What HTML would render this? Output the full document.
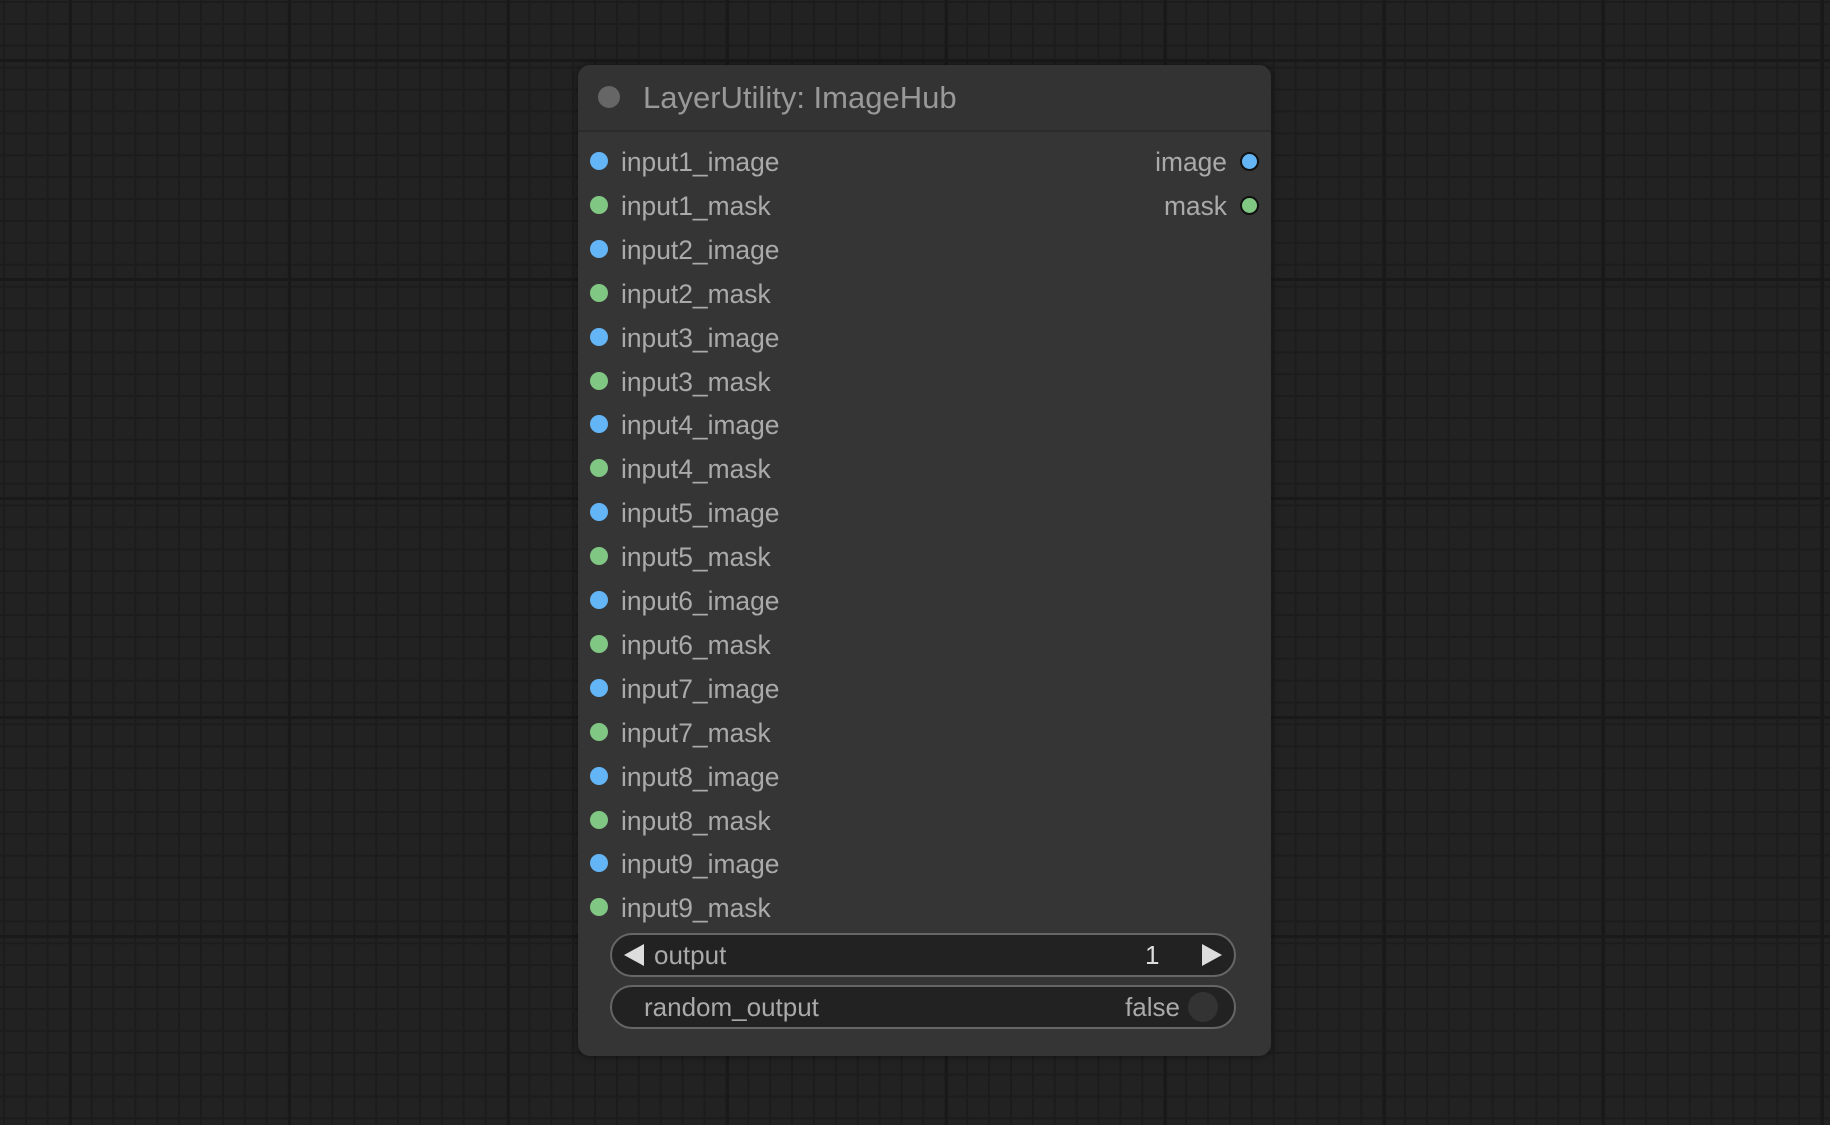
<!DOCTYPE html>
<html><head><meta charset="utf-8"><style>
html,body{margin:0;padding:0;width:1830px;height:1125px;overflow:hidden;background:#222;font-family:"Liberation Sans",Arial,sans-serif}
.bg{position:absolute;inset:0;
background-image:
linear-gradient(to right,#191919 3px,transparent 3px),
linear-gradient(to bottom,#191919 3px,transparent 3px),
linear-gradient(to right,#1c1c1c 2px,transparent 2px),
linear-gradient(to bottom,#1c1c1c 2px,transparent 2px);
background-size:219px 219px,219px 219px,21.9px 21.9px,21.9px 21.9px;
background-position:69px 0,0 59px,3px 0,0 1px;}
.node{position:absolute;left:578px;top:65px;width:693px;height:991px;background:#353535;border-radius:12px;box-shadow:0 0 8px rgba(0,0,0,.5)}
.hdr{position:absolute;left:0;top:0;width:100%;height:65px;background:#333;border-radius:12px 12px 0 0;border-bottom:2px solid #2b2b2b}
.hdot{position:absolute;left:20px;top:21px;width:22px;height:22px;border-radius:50%;background:#666}
.title{position:absolute;left:65px;top:15px;font-size:31px;color:#999;line-height:36px}
.row{position:absolute;font-size:26.4px;color:#aaa;line-height:30px}
.dot{position:absolute;width:18px;height:18px;border-radius:50%}
.b{background:#64b5f6}.g{background:#81c784}
.od{border:2px solid #111;width:15px;height:15px}
.w{position:absolute;left:32px;width:622px;height:40px;border:2px solid #666;border-radius:22px;background:#222;color:#aaa;font-size:26px}
</style></head><body>
<div class="bg"></div>
<div class="node">
<div class="hdr"><div class="hdot"></div><div class="title">LayerUtility: ImageHub</div></div>
<div id="rows"></div>
<div class="row" style="right:44px;top:82px">image</div>
<div class="dot b od" style="left:662px;top:87px"></div>
<div class="row" style="right:44px;top:126px">mask</div>
<div class="dot g od" style="left:662px;top:131px"></div>
<div class="w" style="top:868px">
<div style="position:absolute;left:12px;top:9px;width:0;height:0;border-top:11px solid transparent;border-bottom:11px solid transparent;border-right:20px solid #ddd"></div>
<div style="position:absolute;left:42px;top:5px">output</div>
<div style="position:absolute;left:533px;top:5px;color:#ddd">1</div>
<div style="position:absolute;left:590px;top:9px;width:0;height:0;border-top:11px solid transparent;border-bottom:11px solid transparent;border-left:20px solid #ddd"></div>
</div>
<div class="w" style="top:920px">
<div style="position:absolute;left:32px;top:5px">random_output</div>
<div style="position:absolute;right:54px;top:5px">false</div>
<div style="position:absolute;left:576px;top:5px;width:30px;height:30px;border-radius:50%;background:#333"></div>
</div>
</div>
<script>
var r=document.getElementById('rows'),h='';
for(var i=0;i<18;i++){var n=Math.floor(i/2)+1,img=i%2==0,y=82+i*43.9;
h+='<div class="dot '+(img?'b':'g')+'" style="left:12px;top:'+(y+5)+'px"></div><div class="row" style="left:43px;top:'+y+'px">input'+n+(img?'_image':'_mask')+'</div>';}
r.innerHTML=h;
</script>
</body></html>
